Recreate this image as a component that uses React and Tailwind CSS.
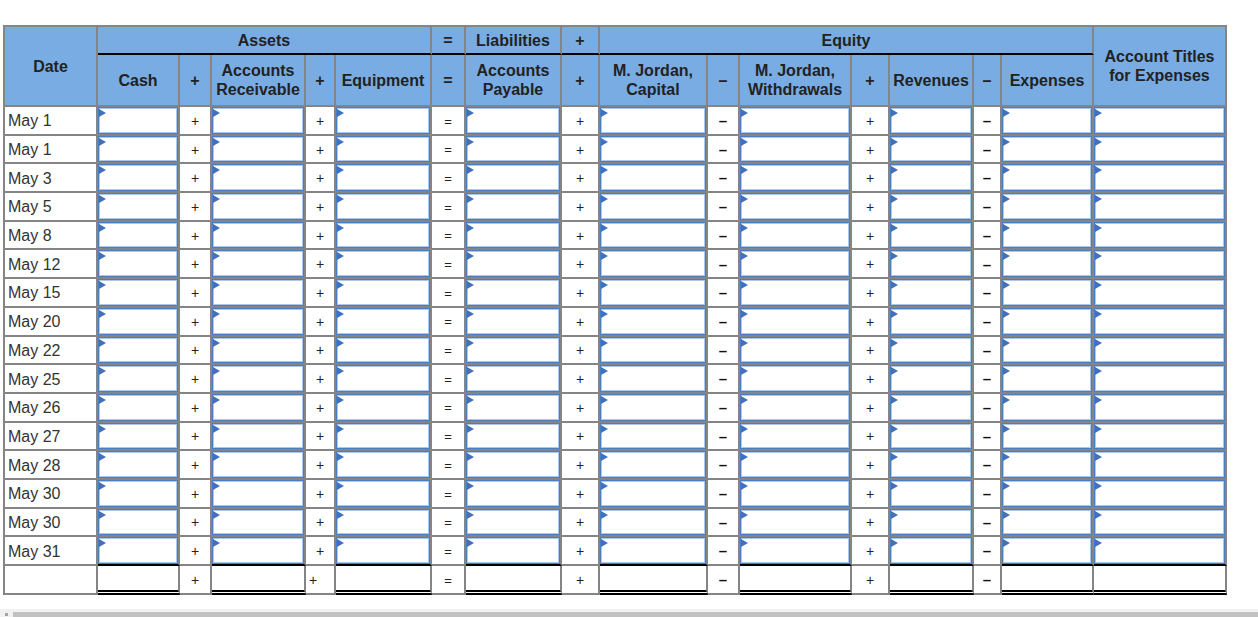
import React from 'react';

const dates = ['May 1', 'May 1', 'May 3', 'May 5', 'May 8', 'May 12', 'May 15', 'May 20', 'May 22', 'May 25', 'May 26', 'May 27', 'May 28', 'May 30', 'May 30', 'May 31'];
const cols = ['box', '+', 'box', '+', 'box', '=', 'box', '+', 'box', '–', 'box', '+', 'box', '–', 'box', 'box'];

const cell = 'border-r-2 border-b-2 border-[#858585]';
const head = 'bg-[#79ace3] text-[#222] font-bold text-[16px] leading-[19px] flex items-center justify-center text-center';

const OpText = ({ sym }) => {
    if (sym === '–') return <span className="font-bold text-[15px] text-[#111]">–</span>;
    if (sym === '=') return <span className="text-[13px] text-[#222]">=</span>;
    return <span className="text-[14px] text-[#222]">+</span>;
};

const InputBox = () => (
    <div className="relative h-full w-full bg-white border border-[#4a7dc2] shadow-[inset_0_0_0_1px_#aac7ee]">
        <span className="absolute left-0 top-[1px] w-0 h-0 border-y-[4px] border-y-transparent border-l-[7px] border-l-[#3d72c2]" />
    </div>
);

const App = () => {
    return (
        <div className="h-[617px] overflow-hidden bg-white font-['Liberation_Sans',Arial,sans-serif]">
            <div className="pt-[25px] pl-[3px]">
                <div className="grid w-[1224px] grid-cols-[93px_82px_32px_94px_30px_96px_34px_96px_38px_108px_32px_112px_38px_84px_28px_92px_133px] grid-rows-[28px_52px_repeat(17,28.7px)] border-l-2 border-t-2 border-[#858585]">
                    {/* header row 1 */}
                    <div className={`${cell} ${head} row-span-2`}>Date</div>
                    <div className={`${cell} ${head} col-span-5 border-b-black`}>Assets</div>
                    <div className={`${cell} ${head} border-b-black`}>=</div>
                    <div className={`${cell} ${head} border-b-black`}>Liabilities</div>
                    <div className={`${cell} ${head} border-b-black`}>+</div>
                    <div className={`${cell} ${head} col-span-7 border-b-black`}>Equity</div>
                    <div className={`${cell} ${head} row-span-2`}>Account Titles<br />for Expenses</div>

                    {/* header row 2 */}
                    <div className={`${cell} ${head}`}>Cash</div>
                    <div className={`${cell} ${head}`}>+</div>
                    <div className={`${cell} ${head}`}>Accounts<br />Receivable</div>
                    <div className={`${cell} ${head}`}>+</div>
                    <div className={`${cell} ${head}`}>Equipment</div>
                    <div className={`${cell} ${head}`}>=</div>
                    <div className={`${cell} ${head}`}>Accounts<br />Payable</div>
                    <div className={`${cell} ${head}`}>+</div>
                    <div className={`${cell} ${head}`}>M. Jordan,<br />Capital</div>
                    <div className={`${cell} ${head}`}>–</div>
                    <div className={`${cell} ${head}`}>M. Jordan,<br />Withdrawals</div>
                    <div className={`${cell} ${head}`}>+</div>
                    <div className={`${cell} ${head}`}>Revenues</div>
                    <div className={`${cell} ${head}`}>–</div>
                    <div className={`${cell} ${head}`}>Expenses</div>

                    {/* body */}
                    {dates.map((d, i) => {
                        const last = i === dates.length - 1;
                        return (
                            <React.Fragment key={i}>
                                <div className={`${cell} flex items-center pl-[3px] pt-[2px] text-[16px] text-[#333]`}>{d}</div>
                                {cols.map((c, j) =>
                                    c === 'box' ? (
                                        <div key={j} className={`${cell} ${last ? 'border-b-black' : ''}`}>
                                            <InputBox />
                                        </div>
                                    ) : (
                                        <div key={j} className={`${cell} flex items-center justify-center pt-[2px]`}>
                                            <OpText sym={c} />
                                        </div>
                                    )
                                )}
                            </React.Fragment>
                        );
                    })}

                    {/* totals */}
                    <div className={cell} />
                    {cols.map((c, j) =>
                        c === 'box' ? (
                            <div key={j} className="border-r-2 border-r-[#858585] border-b-[5px] [border-bottom-style:double] border-b-black" />
                        ) : (
                            <div key={j} className={`${cell} flex items-center pt-[2px] ${j === 3 ? 'justify-start pl-[3px]' : 'justify-center'}`}>
                                <OpText sym={c} />
                            </div>
                        )
                    )}
                </div>
            </div>

            <div className="mt-[14px] h-[8px] bg-[#f1f1f1] flex">
                <div className="w-[13px] flex items-end justify-center pb-[1px]">
                    <span className="block w-[3px] h-[3px] bg-[#a3a3a3]" />
                </div>
                <div className="flex-1 mt-[3px] bg-[#c1c1c1]" />
            </div>
        </div>
    );
};

export default App;
